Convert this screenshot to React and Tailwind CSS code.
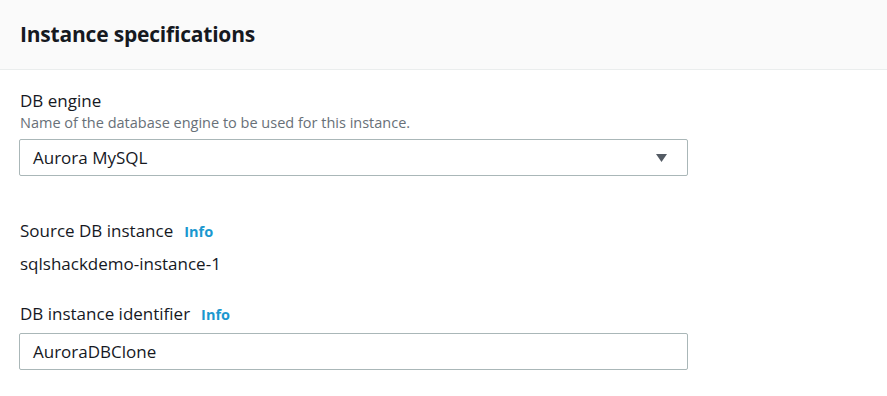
import React from 'react';

const font = { fontFamily: '"Open Sans", "Noto Sans", Arial, sans-serif' };

function Label({ children, info }) {
  return (
    <div className="flex items-baseline text-[17px] leading-[20px] text-[#16191f]">
      <span>{children}</span>
      {info && <a className="ml-[11px] text-[14.5px] font-bold text-[#1b98cf]">Info</a>}
    </div>
  );
}

export default function App() {
  return (
    <div className="w-[887px] h-[396px] bg-white overflow-hidden" style={font}>
      <div className="h-[70px] bg-[#fafafa] border-b border-[#eaeded] flex items-center px-5">
        <h2 className="text-[21px] font-bold text-[#16191f] tracking-[-0.2px]">Instance specifications</h2>
      </div>

      <div className="px-5 pt-[21px]">
        <Label>DB engine</Label>
        <p className="mt-[3px] text-[14.5px] leading-[18px] text-[#687078]">Name of the database engine to be used for this instance.</p>
        <div className="mt-[7px] ml-[-1px] w-[669px] h-[37px] border border-[#aab7b8] rounded-[2px] flex items-center justify-between pl-[13px] pr-[20px]">
          <span className="text-[17px] text-[#16191f]">Aurora MySQL</span>
          <svg width="11" height="8" viewBox="0 0 11 8">
            <path d="M0 0 H11 L5.5 8 Z" fill="#545b64" />
          </svg>
        </div>

        <div className="mt-[45px]">
          <Label info>Source DB instance</Label>
        </div>
        <div className="mt-[12px] text-[17px] leading-[20px] text-[#16191f]">sqlshackdemo-instance-1</div>

        <div className="mt-[30px]">
          <Label info>DB instance identifier</Label>
        </div>
        <div className="mt-[8px] ml-[-1px] w-[669px] h-[37px] border border-[#aab7b8] rounded-[2px] flex items-center pl-[13px]">
          <span className="text-[17px] text-[#16191f]">AuroraDBClone</span>
        </div>
      </div>
    </div>
  );
}
